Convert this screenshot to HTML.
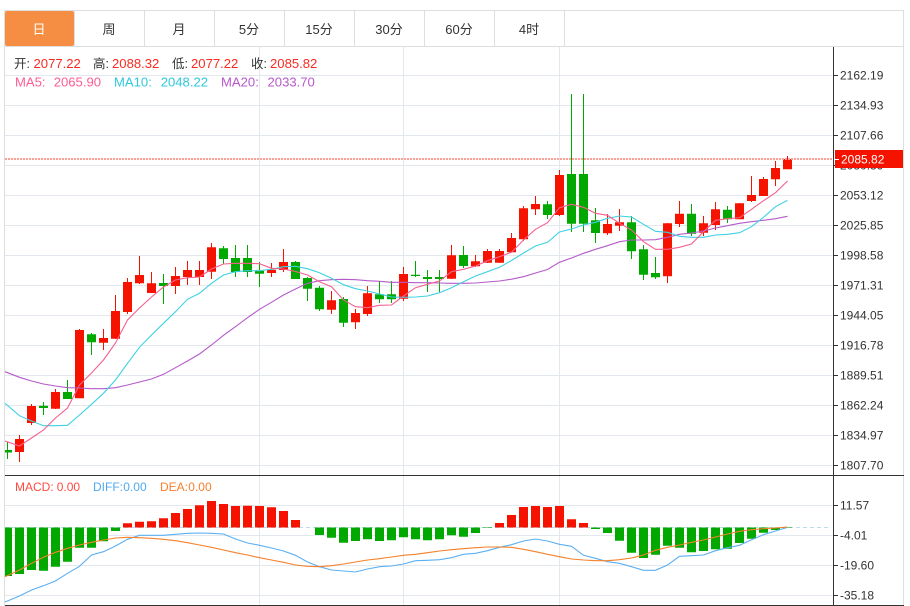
<!DOCTYPE html>
<html><head><meta charset="utf-8"><style>
html,body{margin:0;padding:0;background:#fff;width:910px;height:606px;overflow:hidden}
svg{display:block}
text{font-family:"Liberation Sans","Noto Sans CJK SC",sans-serif}
</style></head><body>
<svg width="910" height="606" viewBox="0 0 910 606" xmlns="http://www.w3.org/2000/svg">
<!-- frame -->
<path d="M4.5 10V606M903.5 10V606M4 10.5H904M4 46.5H904M74.5 11V46M144.5 11V46M214.5 11V46M284.5 11V46M354.5 11V46M424.5 11V46M494.5 11V46M564.5 11V46" stroke="#dedede" fill="none"/>
<rect x="5" y="11" width="69" height="35" rx="2" fill="#f58d42"/>
<g font-size="13" fill="#333" text-anchor="middle">
<text x="39" y="34" fill="#fff">日</text><text x="109" y="34">周</text><text x="179" y="34">月</text><text x="249" y="34">5分</text><text x="319" y="34">15分</text><text x="389" y="34">30分</text><text x="459" y="34">60分</text><text x="529" y="34">4时</text>
</g>
<!-- grid -->
<path d="M5 75.5H834M5 105.5H834M5 135.5H834M5 165.5H834M5 195.5H834M5 225.5H834M5 255.5H834M5 285.5H834M5 315.5H834M5 345.5H834M5 375.5H834M5 405.5H834M5 435.5H834M5 465.5H834M5 505.5H834M5 535.5H834M5 565.5H834M5 595.5H834M259.5 47V605M403.5 47V605M559.5 47V605" stroke="#e3e8ef" fill="none"/>
<!-- candles wicks -->
<path stroke="#f51300" stroke-width="1" fill="none" d="M19.5 435V462M31.5 404V425M55.5 389V409M79.5 329V398M103.5 329V350M115.5 295V339M127.5 278V314M139.5 256V284M151.5 272V293M175.5 267V294M187.5 261V285M199.5 261V285M211.5 243V279M271.5 263V277M283.5 249V272M331.5 291V314M355.5 309V329M367.5 286V316M403.5 267V301M451.5 245V279M475.5 255V267M487.5 249V263M499.5 249V263M511.5 233V252M523.5 206V241M535.5 196V215M559.5 170V216M607.5 214V235M619.5 209V231M667.5 223V283M679.5 201V227M703.5 216V236M715.5 202V230M739.5 203V219M751.5 176V202M763.5 177V196M775.5 161V186M787.5 156V169"/>
<path stroke="#00a800" stroke-width="1" fill="none" d="M7.5 442V459M43.5 402V415M67.5 380V399M91.5 333V355M163.5 274V304M223.5 246V264M235.5 245V277M247.5 245V277M259.5 262V287M295.5 261V279M307.5 277V301M319.5 286V311M343.5 297V327M379.5 281V303M391.5 281V303M415.5 261V277M427.5 270V292M439.5 270V292M463.5 246V268M547.5 201V219M571.5 94V232M583.5 94V232M595.5 208V243M631.5 216V259M643.5 245V280M655.5 257V279M691.5 204V236M727.5 206V223"/>
<!-- candle bodies -->
<path stroke="#f51300" stroke-width="9" fill="none" d="M19.5 439V452M31.5 406V423M55.5 392V408.7M79.5 330V398.3M103.5 338V342.7M115.5 311V338.7M127.5 282V312M139.5 275V283.3M151.5 283.3V293M175.5 276V286M187.5 270V277M199.5 270V277M211.5 247.3V271.7M271.5 269.7V273M283.5 262V270M331.5 300.3V309.7M355.5 313V322.3M367.5 293.3V314M403.5 274V298.7M451.5 255.3V278.7M475.5 261.3V266.3M487.5 251V262.7M499.5 251V262.7M511.5 238V252.3M523.5 208.3V239.3M535.5 204V209.3M559.5 175V215M607.5 224V233.3M619.5 222.3V225.7M667.5 223.3V276.3M679.5 213.7V224M703.5 223.3V232.7M715.5 209.3V225M739.5 203.3V219.3M751.5 195V201M763.5 179V196M775.5 168V179.3M787.5 159V169.3"/>
<path stroke="#00a800" stroke-width="9" fill="none" d="M7.5 450V452.5M43.5 405.7V408M67.5 392V399M91.5 334.3V342.3M163.5 283V286M223.5 248.3V259M235.5 258V272M247.5 258V272M259.5 270.7V273.7M295.5 262V279M307.5 278V288.7M319.5 287.7V309.3M343.5 299V322.7M379.5 294.3V299.3M391.5 294.3V299.3M415.5 274.7V276M427.5 277V279M439.5 277V279M463.5 255V266M547.5 204.3V215M571.5 174V223.7M583.5 174V223.7M595.5 220.3V233M631.5 222.3V251.3M643.5 249.3V274.7M655.5 273V277.3M691.5 213.7V233.7M727.5 209.7V219.3"/>
<rect x="0" y="440" width="5" height="24" fill="#fff"/>
<path d="M4.5 440V464" stroke="#dedede"/>
<!-- MA lines -->
<polyline fill="none" stroke="#b55bc9" stroke-width="1.1" points="5,371.7 19.5,377.3 31.5,381 43.5,384 55.5,386 67.5,387.7 79.5,388 91.5,388.7 103.5,388.7 115.5,387.7 127.5,385 139.5,382 151.5,379 163.5,374.3 175.5,367.7 187.5,361 199.5,354 211.5,345 223.5,335.3 235.5,326.7 247.5,317.7 259.5,309.3 271.5,302.3 283.5,295 295.5,289 307.5,283.3 319.5,280.7 331.5,279.7 343.5,279.3 355.5,279.7 367.5,280.7 379.5,281.3 391.5,282.3 403.5,282.3 415.5,282.7 427.5,282.7 439.5,283 451.5,283.3 463.5,283.3 475.5,283 487.5,282 499.5,281 511.5,279.2 523.5,276.7 535.5,273 547.5,269.5 559.5,262.3 571.5,258 583.5,253.3 595.5,249.3 607.5,245.7 619.5,241.7 631.5,240 643.5,240 655.5,239.7 667.5,237.3 679.5,234.3 691.5,233 703.5,231 715.5,228 727.5,225.7 739.5,223.3 751.5,221.7 763.5,220.3 775.5,218.7 787.5,216.3"/>
<polyline fill="none" stroke="#3ed1e3" stroke-width="1.1" points="5,403.3 19.5,415.7 31.5,421 43.5,425.7 55.5,425.7 67.5,425.3 79.5,415 91.5,404.3 103.5,393.3 115.5,380 127.5,363.3 139.5,347.3 151.5,335 163.5,323.3 175.5,311.7 187.5,299.3 199.5,293.3 211.5,283.3 223.5,275 235.5,271.7 247.5,270.7 259.5,270.7 271.5,269.3 283.5,266.7 295.5,266.3 307.5,268.7 319.5,272.7 331.5,278.3 343.5,284.7 355.5,288.7 367.5,291 379.5,294 391.5,297 403.5,297.3 415.5,297 427.5,296 439.5,292.7 451.5,287.7 463.5,281.7 475.5,276 487.5,271.7 499.5,267.3 511.5,260.5 523.5,253 535.5,246 547.5,242.3 559.5,232 571.5,229 583.5,225 595.5,222.3 607.5,218.3 619.5,216 631.5,217 643.5,224.3 655.5,231.3 667.5,232.3 679.5,236.3 691.5,237.3 703.5,237.3 715.5,235 727.5,234.3 739.5,232.7 751.5,226.7 763.5,217.3 775.5,206.7 787.5,200.3"/>
<polyline fill="none" stroke="#f5608f" stroke-width="1.1" points="5,441 19.5,446 31.5,438 43.5,430 55.5,418 67.5,408 79.5,385 91.5,373 103.5,360 115.5,343 127.5,320 139.5,308 151.5,297 163.5,287 175.5,280 187.5,277.7 199.5,277 211.5,269 223.5,264 235.5,263.3 247.5,263.3 259.5,263.7 271.5,268.3 283.5,269 295.5,271.5 307.5,275 319.5,281.7 331.5,286.7 343.5,300 355.5,306.7 367.5,307.7 379.5,305.3 391.5,305 403.5,296 415.5,287.7 427.5,284.3 439.5,281 451.5,271.7 463.5,269.3 475.5,266 487.5,260.7 499.5,256.7 511.5,252.3 523.5,240 535.5,229.3 547.5,222.7 559.5,207.7 571.5,204.3 583.5,207.3 595.5,213.3 607.5,215.3 619.5,223.3 631.5,230 643.5,241.7 655.5,249.3 667.5,249.3 679.5,247.3 691.5,244 703.5,231.7 715.5,220.3 727.5,218.7 739.5,217.7 751.5,209.3 763.5,200.7 775.5,192.7 787.5,181"/>
<!-- last price line -->
<path d="M5 159H834" stroke="#fb9f97" stroke-width="2" stroke-dasharray="2 1" fill="none"/>
<!-- MACD -->
<path d="M5 527.5H830" stroke="#bcdde8" stroke-dasharray="4 3" fill="none"/>
<path stroke="#00a800" stroke-width="9" fill="none" d="M7.5 527.5V576M19.5 527.5V574M31.5 527.5V570M43.5 527.5V570.7M55.5 527.5V566.7M67.5 527.5V561.7M79.5 527.5V547.7M91.5 527.5V547.7M103.5 527.5V541.3M115.5 527.5V531M319.5 527.5V535M331.5 527.5V537.7M343.5 527.5V542.7M355.5 527.5V541M367.5 527.5V539.3M379.5 527.5V541M391.5 527.5V540.3M403.5 527.5V537.3M415.5 527.5V539.3M427.5 527.5V540.3M439.5 527.5V539.3M451.5 527.5V535.3M463.5 527.5V536.7M475.5 527.5V533M487.5 527.5V528M595.5 527.5V529M607.5 527.5V533M619.5 527.5V540.7M631.5 527.5V552.7M643.5 527.5V558M655.5 527.5V554.7M667.5 527.5V545.7M679.5 527.5V547.7M691.5 527.5V552.3M703.5 527.5V551M715.5 527.5V549.3M727.5 527.5V548.7M739.5 527.5V543M751.5 527.5V538.7M763.5 527.5V532.7M775.5 527.5V530M787.5 527.5V528"/>
<rect x="0" y="527" width="5" height="52" fill="#fff"/>
<path d="M4.5 527V579" stroke="#dedede"/>
<path stroke="#f51300" stroke-width="9" fill="none" d="M127.5 527.5V523.3M139.5 527.5V521.7M151.5 527.5V521.3M163.5 527.5V518.3M175.5 527.5V513M187.5 527.5V509M199.5 527.5V505.3M211.5 527.5V501M223.5 527.5V504M235.5 527.5V506M247.5 527.5V505.7M259.5 527.5V506M271.5 527.5V507.3M283.5 527.5V511M295.5 527.5V520M499.5 527.5V523M511.5 527.5V515M523.5 527.5V507M535.5 527.5V506M547.5 527.5V507M559.5 527.5V506M571.5 527.5V519.3M583.5 527.5V523"/>
<polyline fill="none" stroke="#5cb0f2" stroke-width="1.1" points="5,602 19.5,596 31.5,590 43.5,585.7 55.5,581 67.5,573.3 79.5,566.3 91.5,555 103.5,551.7 115.5,546 127.5,539.3 139.5,535.3 151.5,535.3 163.5,535.3 175.5,534.3 187.5,533.3 199.5,533 211.5,533.3 223.5,534 235.5,539 247.5,543 259.5,545.3 271.5,548 283.5,551 295.5,555.3 307.5,562 319.5,566.7 331.5,570 343.5,571 355.5,572 367.5,569 379.5,566.7 391.5,566 403.5,564 415.5,560.7 427.5,560.3 439.5,559.7 451.5,557.7 463.5,554.3 475.5,553.3 487.5,550.7 499.5,547.3 511.5,544.7 523.5,541 535.5,539 547.5,541 559.5,544.3 571.5,546.3 583.5,555.3 595.5,558.3 607.5,561.7 619.5,563.3 631.5,566.7 643.5,570.3 655.5,570.3 667.5,565 679.5,556.3 691.5,555.7 703.5,555 715.5,550.7 727.5,547.7 739.5,545.3 751.5,539.7 763.5,534.7 775.5,531 787.5,527.3"/>
<polyline fill="none" stroke="#f5812a" stroke-width="1.1" points="5,576.7 19.5,570 31.5,563.3 43.5,557.3 55.5,552.3 67.5,548.3 79.5,545 91.5,542.3 103.5,540 115.5,538 127.5,537.3 139.5,537.7 151.5,538.3 163.5,539.3 175.5,540.7 187.5,542.7 199.5,545 211.5,547.3 223.5,550 235.5,552.7 247.5,555 259.5,557.7 271.5,560 283.5,562.3 295.5,565 307.5,566.3 319.5,566.7 331.5,565.7 343.5,564 355.5,562 367.5,560 379.5,558.7 391.5,557 403.5,555.3 415.5,554.3 427.5,552.7 439.5,551 451.5,549.7 463.5,548.7 475.5,547.7 487.5,547 499.5,547 511.5,547.3 523.5,549.3 535.5,551.7 547.5,554.3 559.5,556.7 571.5,559 583.5,560 595.5,560.7 607.5,560.7 619.5,559.7 631.5,558 643.5,555 655.5,550.3 667.5,547.3 679.5,545 691.5,542.3 703.5,540 715.5,537 727.5,534 739.5,531.3 751.5,529.7 763.5,528.7 775.5,528 787.5,527"/>
<!-- axis -->
<path d="M833.5 47V606M5 475.5H904M5 605.5H904M834 75.5H838M834 105.5H838M834 135.5H838M834 165.5H838M834 195.5H838M834 225.5H838M834 255.5H838M834 285.5H838M834 315.5H838M834 345.5H838M834 375.5H838M834 405.5H838M834 435.5H838M834 465.5H838M834 505.5H838M834 535.5H838M834 565.5H838M834 595.5H838" stroke="#333" fill="none"/>
<g font-size="12" fill="#333">
<text x="840" y="79.5">2162.19</text><text x="840" y="109.5">2134.93</text><text x="840" y="139.5">2107.66</text><text x="840" y="169.5">2080.39</text><text x="840" y="199.5">2053.12</text><text x="840" y="229.5">2025.85</text><text x="840" y="259.5">1998.58</text><text x="840" y="289.5">1971.31</text><text x="840" y="319.5">1944.05</text><text x="840" y="349.5">1916.78</text><text x="840" y="379.5">1889.51</text><text x="840" y="409.5">1862.24</text><text x="840" y="439.5">1834.97</text><text x="840" y="469.5">1807.70</text>
<text x="840" y="509.5">11.57</text><text x="840" y="539.5">-4.01</text><text x="840" y="569.5">-19.60</text><text x="840" y="599.5">-35.18</text>
</g>
<rect x="835" y="150" width="68" height="18" fill="#f51300"/>
<path d="M835 159.5H839" stroke="#fff"/>
<text x="841" y="163.5" fill="#fff" font-size="12">2085.82</text>
<!-- header text -->
<g font-size="13.1" fill="#fa2a20">
<text x="14" y="68" fill="#333" font-size="12.5">开:</text><text x="33.5" y="68">2077.22</text>
<text x="93" y="68" fill="#333" font-size="12.5">高:</text><text x="112" y="68">2088.32</text>
<text x="172" y="68" fill="#333" font-size="12.5">低:</text><text x="191" y="68">2077.22</text>
<text x="251" y="68" fill="#333" font-size="12.5">收:</text><text x="270" y="68">2085.82</text>
<text x="15" y="86.5" fill="#ff5c93">MA5:</text><text x="53.7" y="86.5" fill="#ff5c93">2065.90</text>
<text x="114" y="86.5" fill="#2fc8dd">MA10:</text><text x="160.7" y="86.5" fill="#2fc8dd">2048.22</text>
<text x="221" y="86.5" fill="#b858cc">MA20:</text><text x="267.5" y="86.5" fill="#b858cc">2033.70</text>
</g>
<g font-size="12">
<text x="15" y="491" fill="#ff4a40">MACD:</text><text x="56.7" y="491" fill="#ff4a40">0.00</text>
<text x="93" y="491" fill="#4fa9f2">DIFF:</text><text x="123.3" y="491" fill="#4fa9f2">0.00</text>
<text x="160" y="491" fill="#f97f2c">DEA:</text><text x="188.3" y="491" fill="#f97f2c">0.00</text>
</g>
</svg>
</body></html>
